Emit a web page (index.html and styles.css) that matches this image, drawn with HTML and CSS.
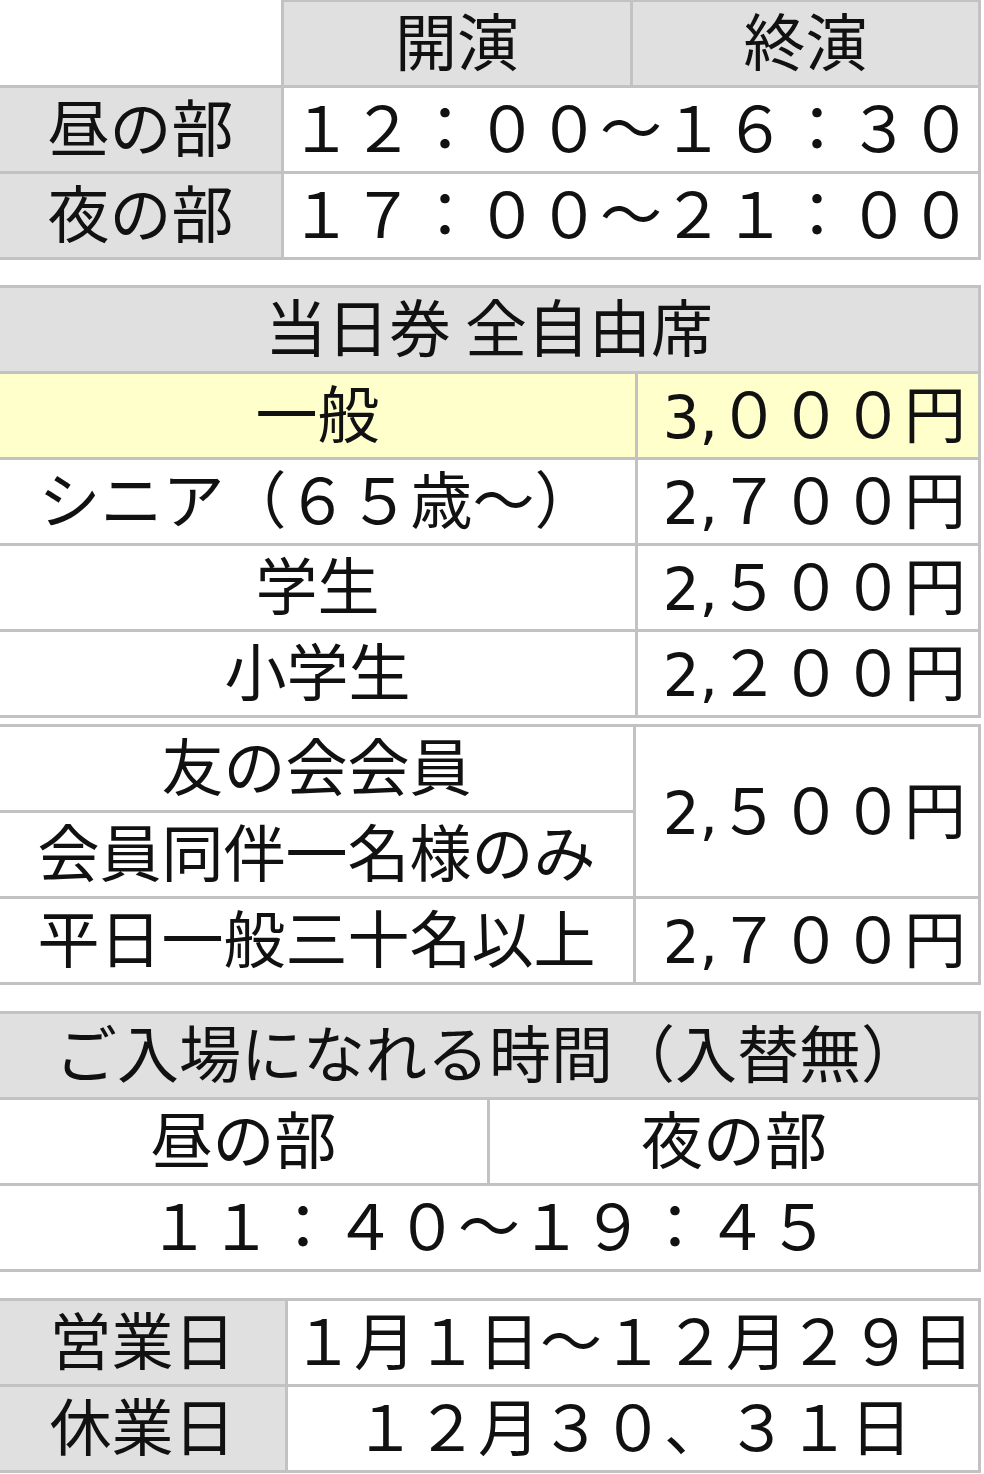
FILE: index.html
```html
<!DOCTYPE html>
<html lang="ja">
<head>
<meta charset="utf-8">
<title>公演時間・料金</title>
<link rel="stylesheet" href="styles.css">
</head>
<body>
<table class="tbl t1">
  <colgroup><col class="c1-1"><col class="c1-2"><col class="c1-3"></colgroup>
  <tr><td class="corner"></td><td class="hd top">開演</td><td class="hd top">終演</td></tr>
  <tr><td class="hd">昼の部</td><td colspan="2">１２：００～１６：３０</td></tr>
  <tr><td class="hd">夜の部</td><td colspan="2">１７：００～２１：００</td></tr>
</table>

<table class="tbl t2 framed">
  <colgroup><col class="c2-1"><col class="c2-2"></colgroup>
  <tr><td class="hd" colspan="2">当日券 全自由席</td></tr>
  <tr class="hl"><td>一般</td><td class="price"><span class="num">3,</span>０００円</td></tr>
  <tr><td>シニア（６５歳～）</td><td class="price"><span class="num">2,</span>７００円</td></tr>
  <tr><td>学生</td><td class="price"><span class="num">2,</span>５００円</td></tr>
  <tr><td>小学生</td><td class="price"><span class="num">2,</span>２００円</td></tr>
</table>

<table class="tbl t3 framed">
  <colgroup><col class="c3-1"><col class="c3-2"></colgroup>
  <tr><td>友の会会員</td><td class="price" rowspan="2"><span class="num">2,</span>５００円</td></tr>
  <tr><td>会員同伴一名様のみ</td></tr>
  <tr><td>平日一般三十名以上</td><td class="price"><span class="num">2,</span>７００円</td></tr>
</table>

<table class="tbl t4 framed">
  <colgroup><col class="c4-1"><col class="c4-2"></colgroup>
  <tr><td class="hd" colspan="2">ご入場になれる時間（入替無）</td></tr>
  <tr><td>昼の部</td><td>夜の部</td></tr>
  <tr><td colspan="2">１１：４０～１９：４５</td></tr>
</table>

<table class="tbl t5 framed">
  <colgroup><col class="c5-1"><col class="c5-2"></colgroup>
  <tr><td class="hd">営業日</td><td>１月１日～１２月２９日</td></tr>
  <tr><td class="hd">休業日</td><td>１２月３０、３１日</td></tr>
</table>
</body>
</html>
```

FILE: styles.css
```css
html, body {
  margin: 0;
  padding: 0;
  background: #ffffff;
}

body {
  font-family: "Noto Sans CJK JP", "Noto Sans", sans-serif;
  color: #111111;
  font-size: 62px;
}

.tbl {
  width: 981px;
  border-collapse: separate;
  border-spacing: 0;
  table-layout: fixed;
}

.tbl td {
  height: 75px;
  padding: 0 0 8px 0;
  box-sizing: content-box;
  line-height: 75px;
  text-align: center;
  white-space: nowrap;
  background: #ffffff;
  border-right: 3px solid #c2c2c2;
  border-bottom: 3px solid #c2c2c2;
  vertical-align: middle;
}

.tbl td.hd {
  background: #e0e0e0;
}

.tbl tr.hl td {
  background: #ffffcc;
}

.tbl td.corner {
  background: #ffffff;
}

.tbl td.top {
  border-top: 2px solid #c2c2c2;
  height: 73px;
}

.tbl td.price {
  text-align: right;
  padding-right: 12px;
}

.num {
  font-family: "DejaVu Sans", "Noto Sans CJK JP", sans-serif;
  font-size: 58px;
  line-height: 1;
}

.framed tr:first-child td {
  border-top: 3px solid #c2c2c2;
}

.t2 { margin-top: 25px; }
.t3 { margin-top: 6px; }
.t4 { margin-top: 26px; }
.t5 { margin-top: 26px; }

.c1-1 { width: 284px; }
.c1-2 { width: 349px; }
.c1-3 { width: 348px; }

.c2-1 { width: 638px; }
.c2-2 { width: 343px; }

.c3-1 { width: 636px; }
.c3-2 { width: 345px; }

.c4-1 { width: 490px; }
.c4-2 { width: 491px; }

.c5-1 { width: 288px; }
.c5-2 { width: 693px; }
```
